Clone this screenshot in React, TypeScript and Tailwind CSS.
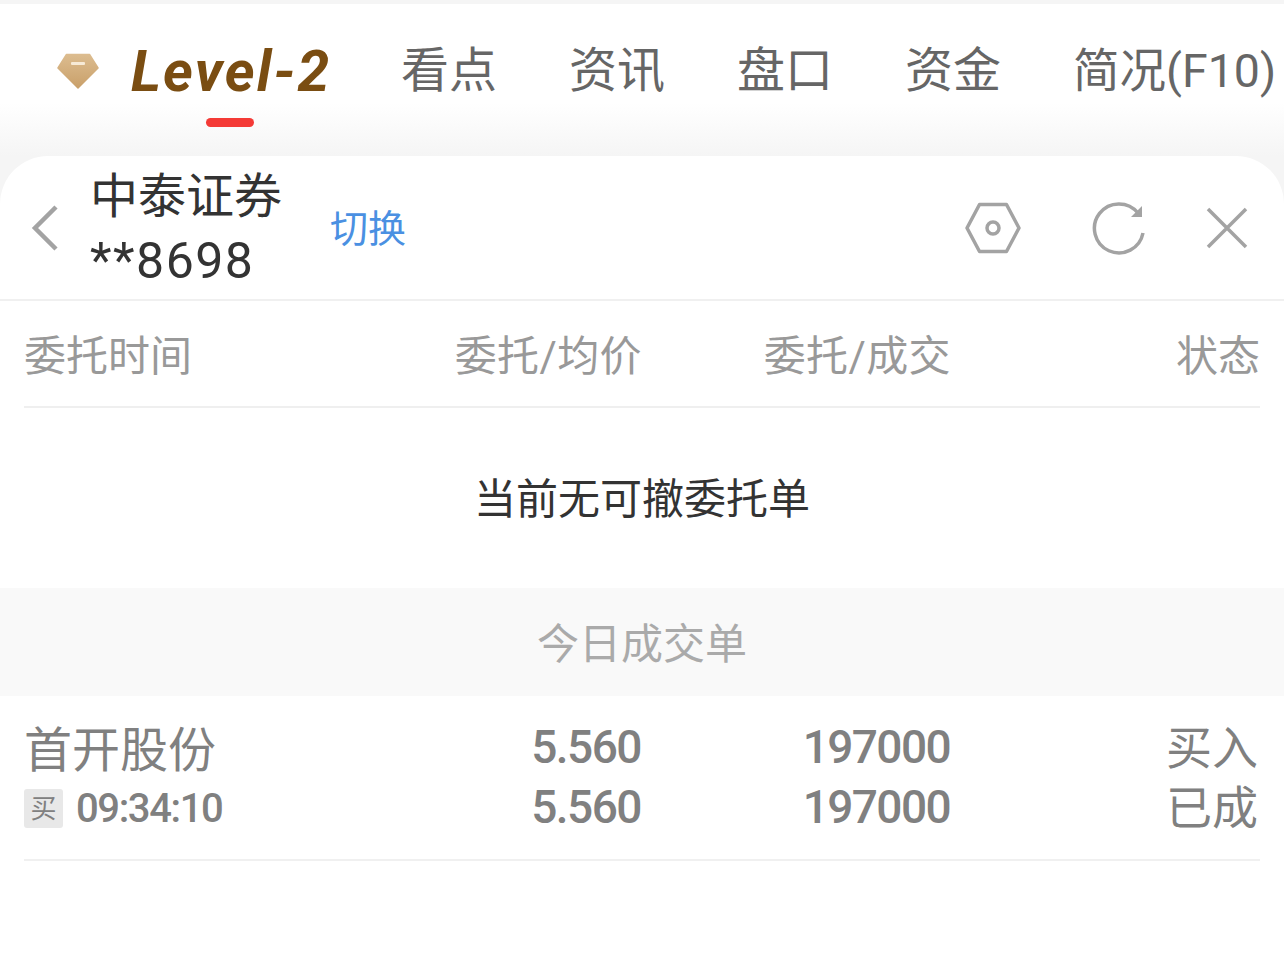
import React from 'react';

const cjk = "font-['Roboto','Noto_Sans_CJK_SC',sans-serif]";

function Diamond() {
  return (
    <svg width="42" height="36" viewBox="0 0 42 36" className="shrink-0">
      <defs>
        <linearGradient id="gem" x1="0" y1="0" x2="0" y2="1">
          <stop offset="0" stopColor="#dcbc8f" />
          <stop offset="1" stopColor="#c9a06a" />
        </linearGradient>
      </defs>
      <path d="M9.5 1.5 H32.5 L41 15 L21 35 L1 15 Z" fill="url(#gem)" stroke="url(#gem)" strokeWidth="1.5" strokeLinejoin="round" />
      <rect x="14" y="9" width="14" height="3" rx="1" fill="#f7ead6" />
    </svg>
  );
}

function TableRow({ children, className }: { children: React.ReactNode; className?: string }) {
  return <div className={`mx-6 grid grid-cols-4 ${className ?? ''}`}>{children}</div>;
}

export default function App() {
  const tabs = ['看点', '资讯', '盘口', '资金'];

  return (
    <div className={`h-[963px] w-[1284px] overflow-hidden bg-white ${cjk}`}>
      {/* top tabs */}
      <div className="h-[156px] border-t-4 border-[#f5f5f5] bg-gradient-to-b from-white from-65% to-[#f5f5f5]">
        <div className="flex h-[134px] items-center whitespace-nowrap">
          <div className="relative ml-[57px] mr-[70px] flex h-full items-center">
            <Diamond />
            <span className="ml-[32px] w-[200px] font-['Roboto'] text-[57px] font-bold italic leading-none tracking-[2.2px] text-[#7a4d12]">
              Level-2
            </span>
            <div className="absolute bottom-[11px] left-[149px] h-[9px] w-[48px] rounded-full bg-[#f43a36]" />
          </div>
          <div className="flex items-center gap-[72px] text-[48px] leading-none text-[#666666]">
            {tabs.map(t => (
              <span key={t}>{t}</span>
            ))}
            <span className="text-[46.5px]">简况(F10)</span>
          </div>
        </div>
      </div>

      {/* card */}
      <div className="bg-[#f5f5f5]">
        <div className="rounded-t-[48px] bg-white">
          <div className="flex h-[145px] items-center border-b-2 border-[#f0f0f0] pl-[30px] pr-[36px]">
            <svg width="30" height="48" viewBox="0 0 30 48" className="shrink-0">
              <path d="M26 3 L5 24 L26 45" fill="none" stroke="#a3a3a3" strokeWidth="4.5" />
            </svg>
            <div className="ml-[30px] pt-[3px] text-[48px] leading-[67px] text-[#333333]">
              <div>中泰证券</div>
              <div className="-mt-[2px] text-[50px] tracking-[1.5px]">**8698</div>
            </div>
            <span className="ml-[48px] mt-[3px] text-[38px] leading-none text-[#4a90e2]">切换</span>
            <div className="ml-auto flex items-center">
              <svg width="58" height="52" viewBox="0 0 58 52">
                <path d="M15.5 2.5 H42.5 L55 26 L42.5 49.5 H15.5 L3 26 Z" fill="none" stroke="#a3a3a3" strokeWidth="3.5" strokeLinejoin="round" />
                <circle cx="29" cy="26" r="6" fill="none" stroke="#a3a3a3" strokeWidth="3.5" />
              </svg>
              <svg width="54" height="54" viewBox="0 0 54 54" className="ml-[70px]">
                <path d="M46 12 A24.5 24.5 0 1 0 51 32" fill="none" stroke="#a3a3a3" strokeWidth="3.5" />
                <path d="M50 5 V16 H39 Z" fill="#a3a3a3" />
              </svg>
              <svg width="42" height="42" viewBox="0 0 42 42" className="ml-[60px]">
                <path d="M2 2 L40 40 M40 2 L2 40" fill="none" stroke="#a3a3a3" strokeWidth="3.5" />
              </svg>
            </div>
          </div>

          {/* table head */}
          <TableRow className="h-[107px] items-center border-b-2 border-[#efefef] pt-[6px] text-[42px] leading-none text-[#999999]">
            <span>委托时间</span>
            <span className="text-right tracking-[0.4px]">委托/均价</span>
            <span className="text-right tracking-[0.4px]">委托/成交</span>
            <span className="text-right">状态</span>
          </TableRow>

          {/* empty state */}
          <div className="flex h-[180px] items-center justify-center pt-[4px] text-[42px] leading-none text-[#333333]">
            当前无可撤委托单
          </div>

          {/* section title */}
          <div className="flex h-[108px] items-center justify-center bg-[#f9f9f9] pt-[6px] text-[42px] leading-none text-[#aaaaaa]">
            今日成交单
          </div>

          {/* deal row */}
          <TableRow className="h-[165px] items-center border-b-2 border-[#f0f0f0] text-[#808080]">
            <div>
              <div className="text-[48px] leading-[48px]">首开股份</div>
              <div className="mt-[14px] flex items-center">
                <span className="flex h-[39px] w-[39px] items-center justify-center rounded-[3px] bg-[#e8e8e8] text-[26px] leading-none">
                  买
                </span>
                <span className="ml-[13px] text-[40px] font-medium leading-none tracking-[-1.4px]">09:34:10</span>
              </div>
            </div>
            <div className="-mt-[2px] mr-[1px] text-right text-[46px] font-medium leading-[60px] tracking-[-1.5px]">
              <div>5.560</div>
              <div>5.560</div>
            </div>
            <div className="-mt-[2px] mr-[1px] text-right text-[46px] font-medium leading-[60px] tracking-[-1.6px]">
              <div>197000</div>
              <div>197000</div>
            </div>
            <div className="mr-[2px] text-right text-[46px] leading-[60px]">
              <div>买入</div>
              <div>已成</div>
            </div>
          </TableRow>
        </div>
      </div>
    </div>
  );
}
